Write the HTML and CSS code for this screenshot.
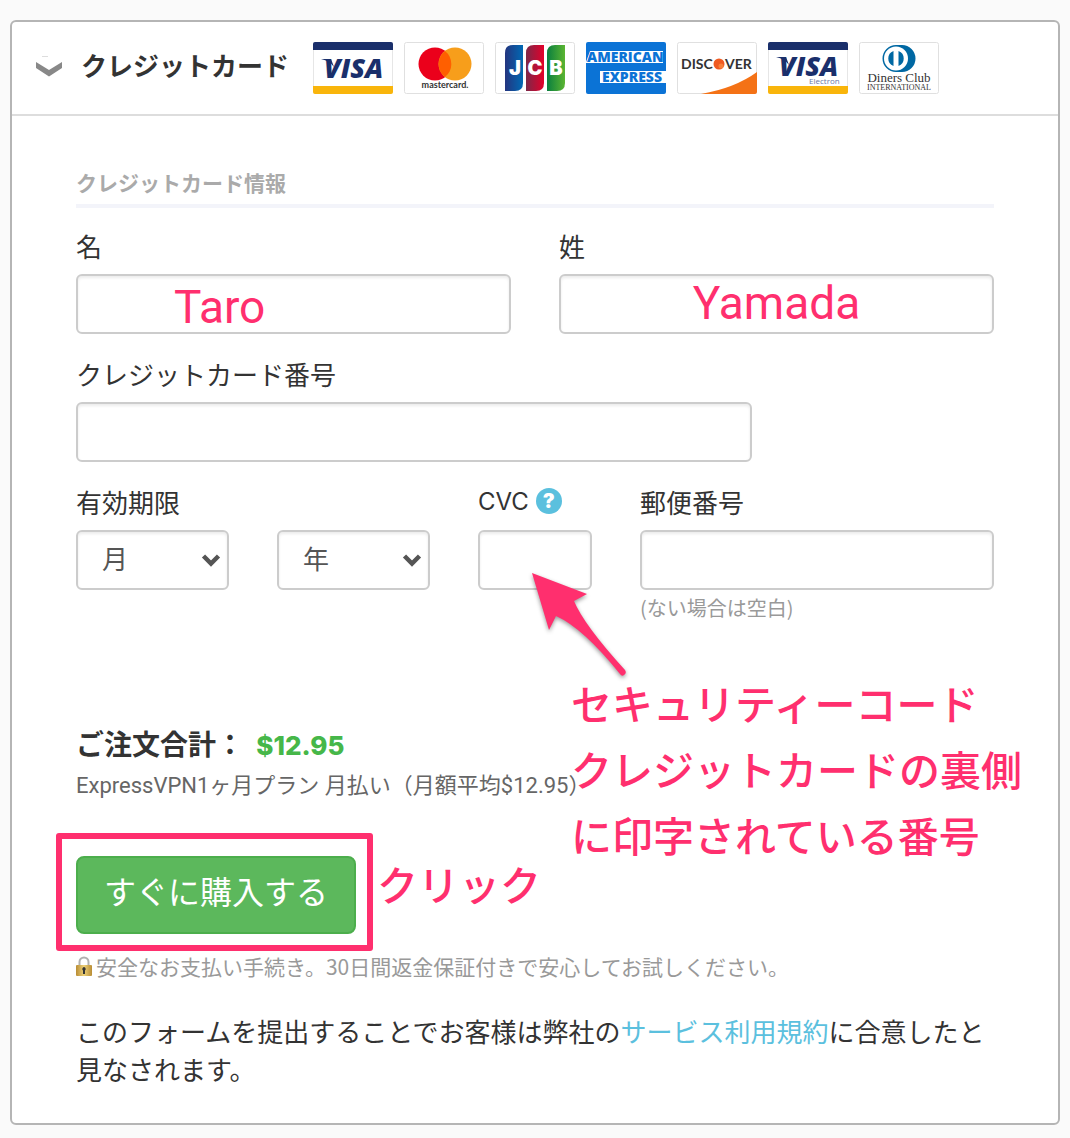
FILE: index.html
```html
<!DOCTYPE html>
<html lang="ja">
<head>
    <meta charset="UTF-8">
    <meta name="viewport" content="width=device-width, initial-scale=1">
    <title>クレジットカード</title>
    <link rel="stylesheet" href="styles.css">
</head>
<body>
<form class="panel">
    <div class="panel-head">
        <svg class="arrow" width="28" height="24" viewBox="0 0 28 24">
            <path d="M1 6l13 8 13-8v6L14 20.500 1 12z" fill="#888"/>
            <path d="M7 .5h6" stroke="#ddd"/>
        </svg>
        <h1>クレジットカード</h1>
        <ul class="cards">
            <li>
                <svg width="80" height="52" viewBox="0 0 80 52" role="img" aria-label="VISA">
                    <rect x=".5" y=".5" width="79" height="51" rx="2" fill="#fff" stroke="#e6e6e6"/>
                    <path d="M0 8V2q0-2 2-2h76q2 0 2 2v6z" fill="#1a2f6b"/>
                    <path d="M0 44h80v6q0 2-2 2H2q-2 0-2-2z" fill="#f9b50b"/>
                    <text class="visa" x="11" y="36">VISA</text>
                    <path d="M8 17h10l3 8q-4-6-13-8z" fill="#1a2f6b"/>
                </svg>
            </li>
            <li>
                <svg width="80" height="52" viewBox="0 0 80 52" role="img" aria-label="mastercard">
                    <rect x=".5" y=".5" width="79" height="51" rx="2" fill="#fff" stroke="#e0e0e0"/>
                    <circle cx="31" cy="22" r="16.500" fill="#eb001b"/>
                    <circle cx="51" cy="22" r="16.500" fill="#f79e1b"/>
                    <path d="M41 9a16.500 16.500 0 0 1 0 26 16.500 16.500 0 0 1 0-26z" fill="#ff5f00"/>
                    <text class="master" x="41" y="46" text-anchor="middle">mastercard.</text>
                </svg>
            </li>
            <li>
                <svg width="80" height="52" viewBox="0 0 80 52" role="img" aria-label="JCB">
                    <defs>
                        <linearGradient id="jcb1"><stop offset="0" stop-color="#24357f"/><stop offset="1" stop-color="#0069b4"/></linearGradient>
                        <linearGradient id="jcb2"><stop offset="0" stop-color="#7c2848"/><stop offset="1" stop-color="#e4002b"/></linearGradient>
                        <linearGradient id="jcb3"><stop offset="0" stop-color="#0a7f3f"/><stop offset="1" stop-color="#5bb531"/></linearGradient>
                    </defs>
                    <rect x=".5" y=".5" width="79" height="51" rx="2" fill="#fff" stroke="#e0e0e0"/>
                    <path d="M10 11q0-8 8-8h10v38q0 8-8 8H10z" fill="url(#jcb1)"/>
                    <path d="M31 11q0-8 8-8h10v38q0 8-8 8H31z" fill="url(#jcb2)"/>
                    <path d="M52 11q0-8 8-8h10v38q0 8-8 8H52z" fill="url(#jcb3)"/>
                    <text class="jcb" x="20" y="33" text-anchor="middle">J</text>
                    <text class="jcb" x="40" y="33" text-anchor="middle">C</text>
                    <text class="jcb" x="61" y="33" text-anchor="middle">B</text>
                </svg>
            </li>
            <li>
                <svg width="80" height="52" viewBox="0 0 80 52" role="img" aria-label="American Express">
                    <rect width="80" height="52" rx="2" fill="#0b73d6"/>
                    <path d="M0 20L4 9h73v12H0zM14 29h66v12H14z" fill="#fff"/>
                    <text class="amex" x="1" y="20">AMERICAN</text>
                    <text class="amex" x="16" y="40">EXPRESS</text>
                </svg>
            </li>
            <li>
                <svg width="80" height="52" viewBox="0 0 80 52" role="img" aria-label="DISCOVER">
                    <rect x=".5" y=".5" width="79" height="51" rx="2" fill="#fff" stroke="#e0e0e0"/>
                    <path d="M24 52Q58 46 80 30v20q0 2-2 2z" fill="#f47216"/>
                    <text class="discover" x="4" y="27">DISC</text>
                    <circle cx="42" cy="22" r="5.500" fill="#ef5a22"/>
                    <circle cx="44" cy="24" r="2.500" fill="#f9803a"/>
                    <text class="discover" x="48" y="27">VER</text>
                </svg>
            </li>
            <li>
                <svg width="80" height="52" viewBox="0 0 80 52" role="img" aria-label="VISA Electron">
                    <rect x=".5" y=".5" width="79" height="51" rx="2" fill="#fff" stroke="#e6e6e6"/>
                    <path d="M0 8V2q0-2 2-2h76q2 0 2 2v6z" fill="#1a2f6b"/>
                    <path d="M0 44h80v6q0 2-2 2H2q-2 0-2-2z" fill="#f9b50b"/>
                    <text class="visa" x="11" y="34">VISA</text>
                    <path d="M8 15h10l3 8q-4-6-13-8z" fill="#1a2f6b"/>
                    <text class="electron" x="41" y="42">Electron</text>
                </svg>
            </li>
            <li>
                <svg width="80" height="52" viewBox="0 0 80 52" role="img" aria-label="Diners Club International">
                    <rect x=".5" y=".5" width="79" height="51" rx="2" fill="#fff" stroke="#e0e0e0"/>
                    <path d="M37 3h6a13 13 0 0 1 0 27h-6a13.500 13.500 0 0 1 0-27z" fill="#0068a3"/>
                    <circle cx="37" cy="16.500" r="12" fill="#fff"/>
                    <path d="M34.500 9v15a8 8 0 0 1 0-15zM39.500 9v15a8 8 0 0 0 0-15z" fill="#0068a3"/>
                    <text class="diners" x="40" y="40" text-anchor="middle">Diners Club</text>
                    <text class="inter" x="40" y="48" text-anchor="middle">INTERNATIONAL</text>
                </svg>
            </li>
        </ul>
    </div>

    <div class="panel-body">
        <h2>クレジットカード情報</h2>

        <div class="row names">
            <div class="field">
                <label for="first">名</label>
                <input type="text" id="first">
                <span class="note taro">Taro</span>
            </div>
            <div class="field">
                <label for="last">姓</label>
                <input type="text" id="last">
                <span class="note yamada">Yamada</span>
            </div>
        </div>

        <div class="row">
            <div class="field number">
                <label for="number">クレジットカード番号</label>
                <input type="text" id="number">
            </div>
        </div>

        <div class="row details">
            <div class="field">
                <label for="month">有効期限</label>
                <div class="expiry">
                    <div class="select">
                        <select id="month"><option>月</option></select>
                        <svg width="20" height="14" viewBox="0 0 20 14"><path d="M2.500 3l7.500 7.500L17.500 3" fill="none" stroke="#555" stroke-width="4.500"/></svg>
                    </div>
                    <div class="select">
                        <select id="year" aria-label="年"><option>年</option></select>
                        <svg width="20" height="14" viewBox="0 0 20 14"><path d="M2.500 3l7.500 7.500L17.500 3" fill="none" stroke="#555" stroke-width="4.500"/></svg>
                    </div>
                </div>
            </div>
            <div class="field">
                <div class="label-line">
                    <label class="latin" for="cvc">CVC</label>
                    <button class="help" type="button">?</button>
                </div>
                <input type="text" id="cvc">
                <svg class="pointer" width="104" height="110" viewBox="0 0 104 110">
                    <path d="M4 3l55 21-13 7q10 24 51 69 2 3-1 5-2 2-4-1-37-46-64-58l-7 14z" fill="#ff2f6e"/>
                </svg>
            </div>
            <div class="field">
                <label for="zip">郵便番号</label>
                <input type="text" id="zip">
                <p class="hint">(ない場合は空白)</p>
            </div>
        </div>

        <div class="order">
            <p class="total">ご注文合計： <strong>$12.95</strong></p>
            <p class="plan">ExpressVPN1ヶ月プラン 月払い（月額平均$12.95）</p>
            <p class="note code">セキュリティーコード<br>クレジットカードの裏側<br>に印字されている番号</p>
        </div>

        <div class="buy">
            <button class="buy-btn" type="submit">すぐに購入する</button>
            <span class="note click">クリック</span>
        </div>

        <p class="secure">
            <svg width="16" height="20" viewBox="0 0 16 20">
                <defs>
                    <linearGradient id="gold"><stop offset="0" stop-color="#b98d35"/><stop offset=".5" stop-color="#ecd078"/><stop offset="1" stop-color="#b98d35"/></linearGradient>
                </defs>
                <path d="M3.500 10V6a4.500 4.500 0 0 1 9 0v4" fill="none" stroke="#b0b0b0" stroke-width="2"/>
                <rect y="9" width="16" height="11" rx="1" fill="url(#gold)"/>
                <path d="M8 11a2 2 0 0 1 1 3.500V18H7v-3.500A2 2 0 0 1 8 11z" fill="#333"/>
            </svg>
            安全なお支払い手続き。30日間返金保証付きで安心してお試しください。
        </p>

        <p class="terms">このフォームを提出することでお客様は弊社の<a href="#">サービス利用規約</a>に合意したと見なされます。</p>
    </div>
</form>
</body>
</html>
```
FILE: styles.css
```css
*{
    margin:0;
    padding:0;
    box-sizing: border-box;
}
body{
    background: #fafafa;
    color: #333;
    font-family: "Noto Sans CJK JP", sans-serif;
    font-size: 26px;
    line-height: 36px;
}
ul{
    list-style: none;
}
.panel{
    margin:20px 10px 12px;
    border:solid 2px #b5b5b5;
    border-radius: 6px;
    background: #fff;
}

/* header */
.panel-head{
    display: flex;
    align-items: center;
    padding:20px 23px;
    border-bottom:solid 2px #ddd;
}
.panel-head .arrow{
    flex: none;
    margin-right:18px;
}
h1{
    margin:0 24px 6px 0;
    font-size: 26px;
    line-height: 36px;
    white-space: nowrap;
}
.cards{
    display: flex;
    gap:11px;
}
.cards svg{
    display: block;
}
.visa{
    font: italic 800 27px "Open Sans", sans-serif;
    fill: #1a2f6b;
}
.electron{
    font: 8px "Open Sans", sans-serif;
    fill: #6a78a8;
}
.master{
    font: 700 9px Lato, sans-serif;
    fill: #333;
}
.jcb{
    font: 900 20px Inter, sans-serif;
    fill: #fff;
}
.amex{
    font: 800 14px "Open Sans", sans-serif;
    fill: #0b73d6;
}
.discover{
    font: 700 14px Lato, sans-serif;
    fill: #333;
}
.diners{
    font: 13px "Liberation Serif", serif;
    fill: #333;
}
.inter{
    font: 8px "Liberation Serif", serif;
    fill: #333;
}

/* form */
.panel-body{
    padding:48px 64px 35px;
}
h2{
    margin-bottom:20px;
    padding-bottom:4px;
    border-bottom:solid 4px #f3f4fa;
    color: #aaa;
    font-size: 21px;
    line-height: 36px;
}
.row{
    margin-bottom:22px;
}
.names{
    display: grid;
    grid-template-columns: 1fr 1fr;
    gap:48px;
}
.number{
    max-width: 676px;
}
.details{
    display: grid;
    grid-template-columns: 354fr 114fr 354fr;
    gap:48px;
}
.expiry{
    display: grid;
    grid-template-columns: 1fr 1fr;
    gap:48px;
}
.field{
    position: relative;
    min-width: 0;
}
.field label{
    display: block;
    margin-bottom:10px;
}
.label-line{
    display: flex;
    gap:7px;
}
.field .latin{
    font-family: Inter, sans-serif;
    font-size: 24px;
}
input,select{
    display: block;
    width:100%;
    height:60px;
    border:solid 2px #ccc;
    border-radius: 6px;
    background: #fff;
    box-shadow: inset 0 2px 3px rgba(0,0,0,.08);
    color: #555;
    font: inherit;
}
input{
    padding:0 24px;
}
.select{
    position: relative;
}
.select select{
    appearance: none;
    padding:0 24px 4px;
}
.select svg{
    position: absolute;
    right:8px;
    top:23px;
    pointer-events: none;
}
.help{
    width:26px;
    height:26px;
    margin-top:4px;
    border:0;
    border-radius: 50%;
    background: #5bc0de;
    color: #fff;
    font: 900 20px/26px Inter, sans-serif;
}
.hint{
    margin-top:4px;
    color: #999;
    font-size: 20px;
    line-height: 28px;
}

/* order */
.order{
    position: relative;
    margin-top:101px;
}
.total{
    font-size: 28px;
    font-weight: 700;
    line-height: 40px;
}
.total strong{
    margin-left:6px;
    color: #46b749;
    font-family: Inter, sans-serif;
    font-size: 26px;
    font-weight: 800;
}
.plan{
    margin-top:3px;
    color: #666;
    font-family: Roboto, "Noto Sans CJK JP", sans-serif;
    font-size: 22px;
    line-height: 34px;
}
.buy{
    position: relative;
    width: fit-content;
    margin-top:53px;
}
.buy:before{
    content: "";
    position: absolute;
    inset: -23px -17px -17px -20px;
    border:solid 6px #ff2f6e;
    border-radius: 3px;
}
.buy-btn{
    position: relative;
    display: block;
    height:78px;
    padding:0 26px 10px;
    border:solid 2px #4cae4c;
    border-radius: 8px;
    background: #5cb85c;
    color: #fff;
    font: inherit;
    font-size: 32px;
}
.secure{
    display: flex;
    align-items: center;
    gap:4px;
    margin-top:17px;
    color: #999;
    font-size: 21px;
    line-height: 30px;
}
.terms{
    margin-top:31px;
    line-height: 38px;
}
.terms a{
    color: #5bc0de;
    text-decoration: none;
}

/* pink notes over the form */
.note{
    position: absolute;
    color: #ff2f6e;
    font-size: 41px;
    font-weight: 500;
    line-height: 66px;
    white-space: nowrap;
}
.taro,.yamada{
    font-family: Roboto, sans-serif;
    font-size: 46px;
    font-weight: 400;
}
.taro{
    left:98px;
    top:46px;
}
.yamada{
    left:0;
    right:0;
    top:42px;
    text-align: center;
}
.code{
    left:495px;
    top:-54px;
}
.click{
    left:301px;
    top:-6px;
}
.pointer{
    position: absolute;
    left:50px;
    top:86px;
    filter: drop-shadow(0 2px 2px rgba(0,0,0,.4));
}
```
